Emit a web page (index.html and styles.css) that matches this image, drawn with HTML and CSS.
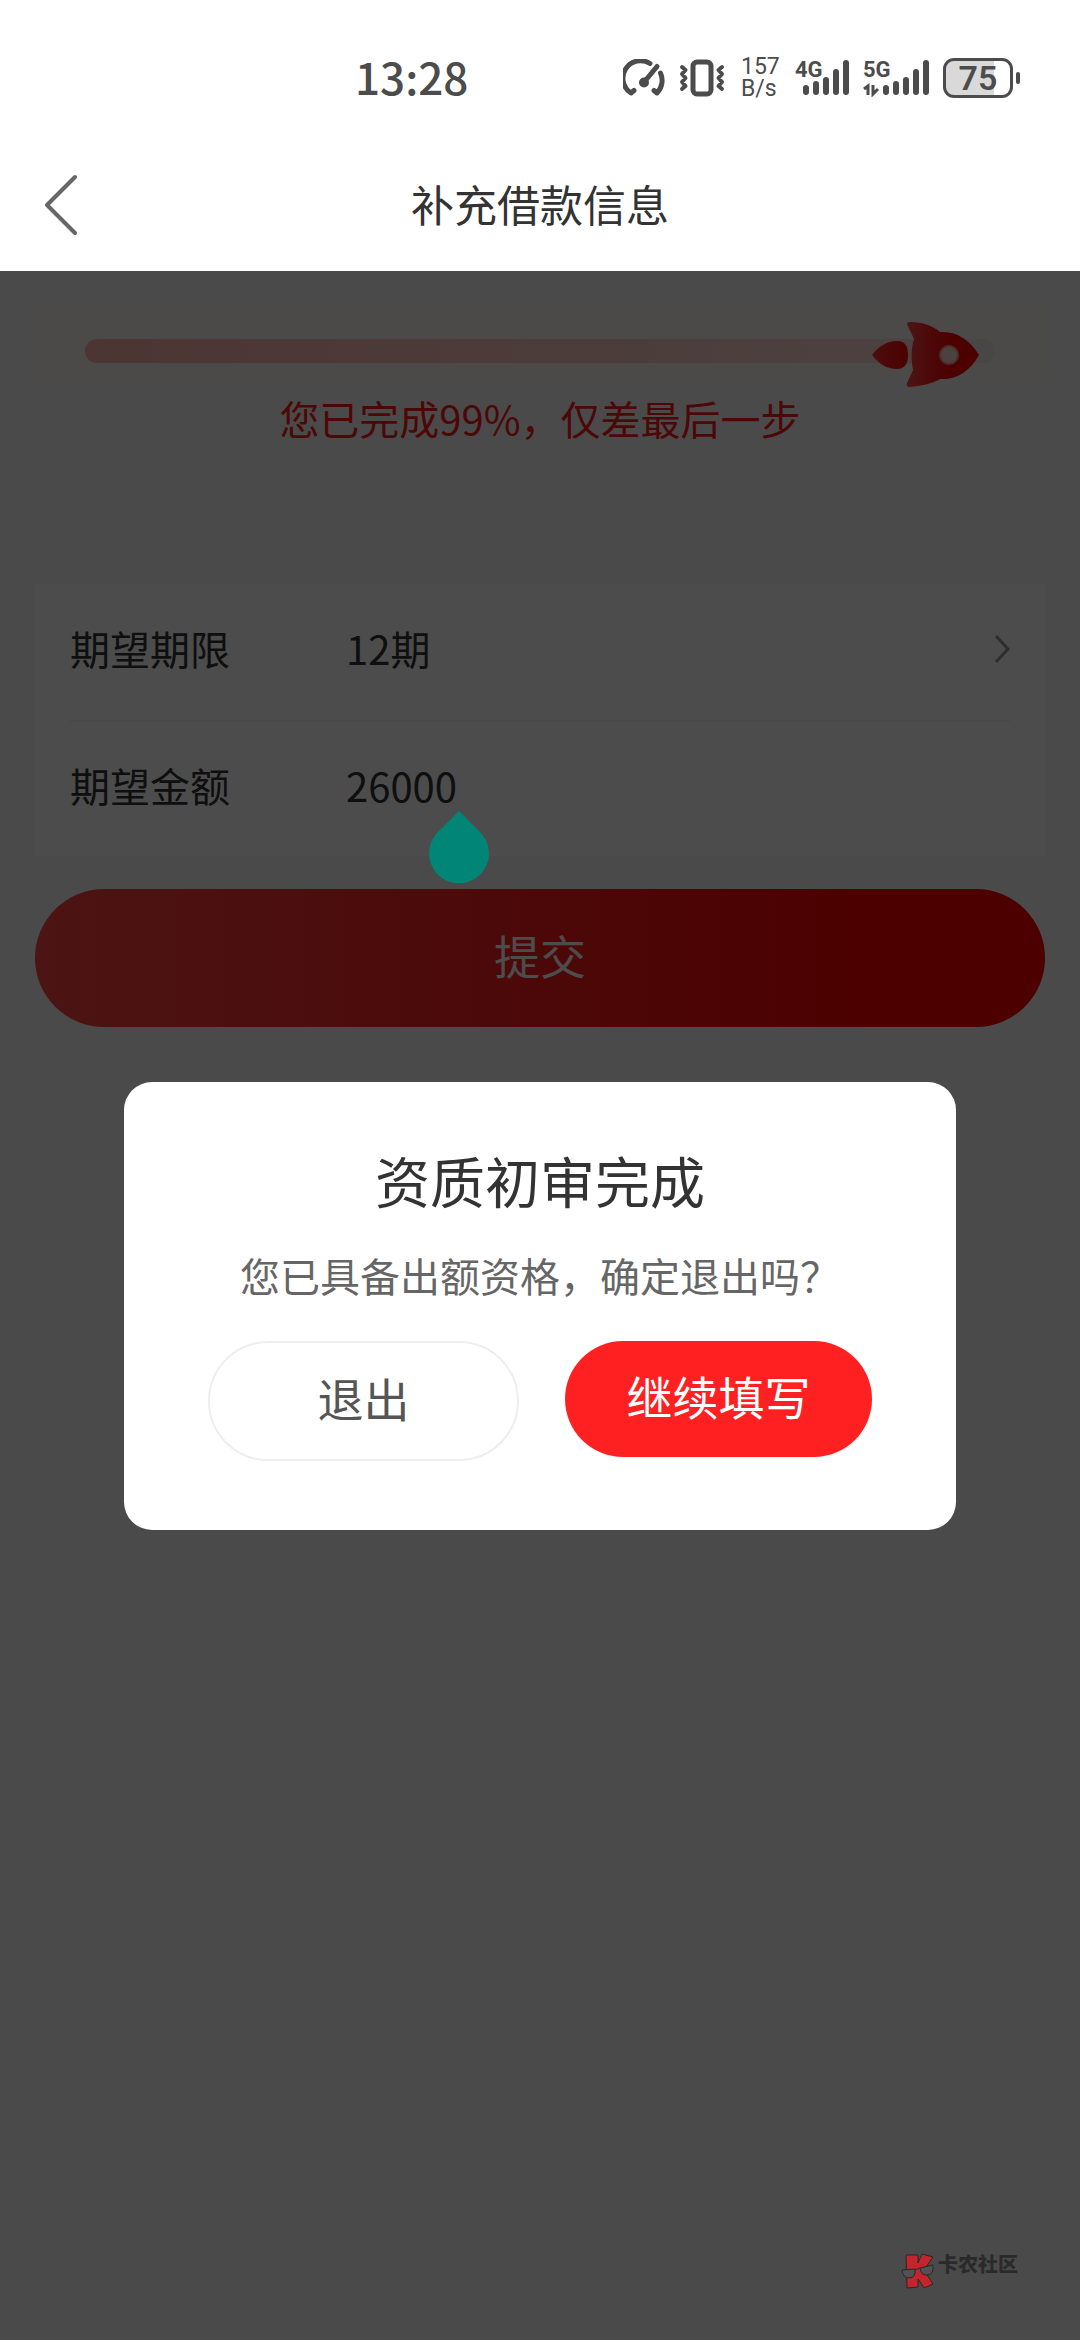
FILE: index.html
```html
<!DOCTYPE html>
<html lang="zh-CN">
<head>
<meta charset="utf-8">
<meta name="viewport" content="width=device-width, initial-scale=1">
<title>补充借款信息</title>
<link rel="stylesheet" href="styles.css">
</head>
<body>
<header class="top">
  <div class="status">
    <span class="clock">13:28</span>
    <div class="indicators">
      <svg width="42" height="38" viewBox="0 0 42 38" fill="none" stroke="currentColor" stroke-width="5" stroke-linecap="round" stroke-linejoin="round">
        <path d="M27 4.500A17.500 17.500 0 0 0 8 34L11 31.500"/><path d="M37.500 14A18 18 0 0 1 34 34L31 31.500"/>
        <path d="M34 7.500L22 22"/><circle cx="21" cy="23.500" r="2.500"/>
      </svg>
      <svg width="46" height="38" viewBox="0 0 46 38" fill="none" stroke="currentColor" stroke-linecap="round" stroke-linejoin="round">
        <rect x="14" y="3" width="18" height="32" rx="4" stroke-width="5"/>
        <path d="M3 8L6.500 11L3 15L6.500 19L3 23L6.500 27L3 30M43 8L39.500 11L43 15L39.500 19L43 23L39.500 27L43 30" stroke-width="4"/>
      </svg>
      <span class="speed"><span>157</span><span>B/s</span></span>
      <span class="signal">
        <span class="net">4G</span>
        <svg width="54" height="38" viewBox="0 0 54 38" stroke="currentColor" stroke-width="6" stroke-linecap="round">
          <path d="M11 29V33M21 25V33M31 21V33M41 13V33M51 4V33"/>
        </svg>
      </span>
      <span class="signal">
        <span class="net">5G</span>
        <svg width="66" height="38" viewBox="0 0 66 38">
          <path d="M23 29V33M33 25V33M43 21V33M53 13V33M63 4V33" stroke="currentColor" stroke-width="6" stroke-linecap="round"/>
          <path d="M1 30L5 27V36M10 26V35L15 30" fill="none" stroke="currentColor" stroke-width="3"/>
        </svg>
      </span>
      <span class="battery"><span class="cell">75</span></span>
    </div>
  </div>
  <nav class="nav">
    <button class="back" type="button" aria-label="返回">
      <svg width="34" height="62" viewBox="0 0 34 62" fill="none" stroke="currentColor" stroke-width="4" stroke-linecap="round" stroke-linejoin="round"><path d="M32 3L4 31L32 59"/></svg>
    </button>
    <h1 class="title">补充借款信息</h1>
  </nav>
</header>

<main class="content">
  <section class="progress">
    <div class="progress-card">
      <div class="track"><div class="fill"></div></div>
      <svg class="rocket" width="108" height="66" viewBox="0 0 108 66">
        <defs>
          <linearGradient id="body"><stop offset="0" stop-color="#ff4444"/><stop offset="0.600" stop-color="#ff0000"/></linearGradient>
          <linearGradient id="flame"><stop offset="0" stop-color="#ff3030"/><stop offset="1" stop-color="#ff0000"/></linearGradient>
        </defs>
        <path d="M1 34C8 25 16 20 26 20C34 20 37 25 37 34C37 42 34 48 26 48C16 48 8 43 1 34Z" fill="url(#flame)"/>
        <path d="M36 3Q36 1 39 1C52 1 62 5 69 11C86 10 99 19 108 34C99 50 86 59 69 58C62 62 52 65 38 66Q35 66 36 62L42 49C40 38 40 28 43 18Z" fill="url(#body)"/>
        <circle cx="78" cy="34" r="9" fill="#ffd6d6" stroke="#ff9c9c" stroke-width="2"/>
      </svg>
    </div>
    <p class="progress-text">您已完成99%，仅差最后一步</p>
  </section>

  <form class="form">
    <div class="fields">
      <div class="row">
        <label class="label" for="term">期望期限</label>
        <div class="control">
          <input class="input" id="term" type="text" value="12期" readonly>
          <svg class="arrow" width="18" height="30" viewBox="0 0 18 30" fill="none" stroke="currentColor" stroke-width="3"><path d="M4 3L16 16L4 29"/></svg>
        </div>
      </div>
      <div class="row">
        <label class="label" for="amount">期望金额</label>
        <div class="control">
          <input class="input" id="amount" type="text" inputmode="numeric" value="26000">
          <svg class="handle" width="60" height="72" viewBox="0 0 60 72"><path d="M30 0L50 20A30 30 0 1 1 10 20Z" fill="#008577"/></svg>
        </div>
      </div>
    </div>
    <button class="submit" type="button">提交</button>
  </form>

  <div class="overlay">
    <section class="dialog" role="dialog" aria-modal="true" aria-labelledby="dialog-title">
      <h2 class="dialog-title" id="dialog-title">资质初审完成</h2>
      <p class="dialog-text">您已具备出额资格，确定退出吗？</p>
      <div class="actions">
        <button class="action exit" type="button">退出</button>
        <button class="action go-on" type="button">继续填写</button>
      </div>
    </section>
  </div>

  <div class="brand">
    <svg width="34" height="36" viewBox="0 0 34 36" stroke="#26282a" stroke-linejoin="round">
      <path d="M5 2H17V10L21 1L32 4L23 17L32 31L23 35L17 26V34L6 35Z" fill="#c4242c" stroke-width="1"/>
      <path d="M1 17L14 16Q15 25 8 25Q2 25 1 17ZM19 15L32 12Q33 21 27 22Q20 23 19 15Z" fill="#505254" stroke-width="1"/>
      <path d="M14 17L19 15"/>
    </svg>
    <span class="brand-name">卡农社区</span>
  </div>
</main>
</body>
</html>
```
FILE: styles.css
```css
* {
  box-sizing: border-box;
  margin: 0;
}

body {
  display: flex;
  flex-direction: column;
  min-height: 100vh;
  font-family: "Noto Sans CJK SC", "Noto Sans", sans-serif;
  font-size: 40px;
  line-height: 60px;
  color: #333;
  background: #f7f7f7;
}

button,
input {
  padding: 0;
  border: 0;
  background: none;
  font: inherit;
  color: inherit;
}

svg {
  display: block;
  flex: none;
}

/* Status bar and page title */
.top {
  background: #fff;
}

.status {
  display: flex;
  align-items: center;
  justify-content: space-between;
  height: 108px;
  padding: 48px 60px 0 355px;
  color: #4c4c4c;
}

.clock {
  padding-bottom: 4px;
  font-size: 44px;
  font-weight: 500;
}

.indicators {
  display: flex;
  align-items: center;
  gap: 14px;
  font-family: Roboto, "Noto Sans", sans-serif;
}

.speed {
  display: flex;
  flex-direction: column;
  width: 40px;
  margin-left: 2px;
  font-size: 23px;
  line-height: 22px;
}

.signal {
  position: relative;
}

.net {
  position: absolute;
  top: -1px;
  left: 0;
  font-size: 22px;
  font-weight: 700;
  line-height: 24px;
}

.battery {
  display: flex;
  align-items: center;
  gap: 3px;
}

.battery::after {
  content: "";
  width: 4px;
  height: 12px;
  border-radius: 2px;
  background: currentColor;
}

.cell {
  width: 70px;
  height: 40px;
  border: 3px solid;
  border-radius: 11px;
  background: linear-gradient(90deg, #d9d9d9 75%, #fff 75%);
  font-size: 34px;
  font-weight: 600;
  line-height: 34px;
  text-align: center;
}

.nav {
  display: grid;
  grid-template-columns: 80px 1fr 80px;
  align-items: center;
  height: 163px;
  padding: 30px 43px 0;
}

.back {
  color: #666;
}

.title {
  padding-bottom: 4px;
  font-size: 43px;
  font-weight: 400;
  text-align: center;
}

/* Page content */
.content {
  position: relative;
  flex: 1;
  padding: 33px 35px;
}

.progress-card {
  position: relative;
  padding: 35px 50px 13px;
  background: #faf7f2;
}

.track {
  height: 24px;
  border-radius: 12px;
  background: #eee;
}

.fill {
  width: 94%;
  height: 24px;
  border-radius: 12px;
  background: linear-gradient(90deg, #ffb3ad, #ffdcdc);
}

.rocket {
  position: absolute;
  top: 17px;
  right: 66px;
}

.progress-text {
  margin-top: 12px;
  color: #ff1a1a;
  text-align: center;
}

.form {
  margin-top: 136px;
}

.fields {
  padding: 0 35px;
  background: #fff;
}

.row {
  display: flex;
  align-items: center;
  height: 136px;
  padding-bottom: 8px;
}

.row + .row {
  border-top: 2px solid #f5f5f5;
}

.label {
  width: 276px;
}

.control {
  position: relative;
  display: flex;
  flex: 1;
  align-items: center;
}

.input {
  flex: 1;
  min-width: 0;
  height: 60px;
  outline: 0;
}

.arrow {
  color: #999;
}

.handle {
  position: absolute;
  z-index: 2;
  top: 56px;
  left: 83px;
}

.submit {
  display: block;
  width: 100%;
  height: 138px;
  margin-top: 33px;
  padding-bottom: 8px;
  border-radius: 69px;
  background: linear-gradient(90deg, #ff4444, #ff0000 85%);
  color: #fff;
  font-size: 46px;
}

/* Confirmation dialog */
.overlay {
  position: absolute;
  z-index: 1;
  inset: 0;
  display: flex;
  align-items: center;
  justify-content: center;
  padding: 0 124px;
  background: rgba(0, 0, 0, 0.7);
}

.dialog {
  flex: 1;
  max-width: 832px;
  padding: 57px 84px 69px;
  border-radius: 28px;
  background: #fff;
  text-align: center;
}

.dialog-title {
  font-size: 55px;
  font-weight: 400;
  line-height: 80px;
}

.dialog-text {
  margin-top: 26px;
  color: #666;
}

.actions {
  display: flex;
  align-items: flex-start;
  gap: 46px;
  margin-top: 36px;
}

.action {
  flex: 1;
  height: 116px;
  padding-bottom: 8px;
  border-radius: 60px;
  font-size: 46px;
}

.exit {
  height: 120px;
  border: 2px solid #eee;
  color: #555;
}

.go-on {
  background: #ff2121;
  color: #fff;
}

.brand {
  position: absolute;
  z-index: 2;
  right: 62px;
  bottom: 51px;
  display: flex;
  align-items: flex-start;
  gap: 3px;
}

.brand-name {
  color: #2a2a2a;
  font-size: 20px;
  font-weight: 900;
  line-height: 22px;
}
```
